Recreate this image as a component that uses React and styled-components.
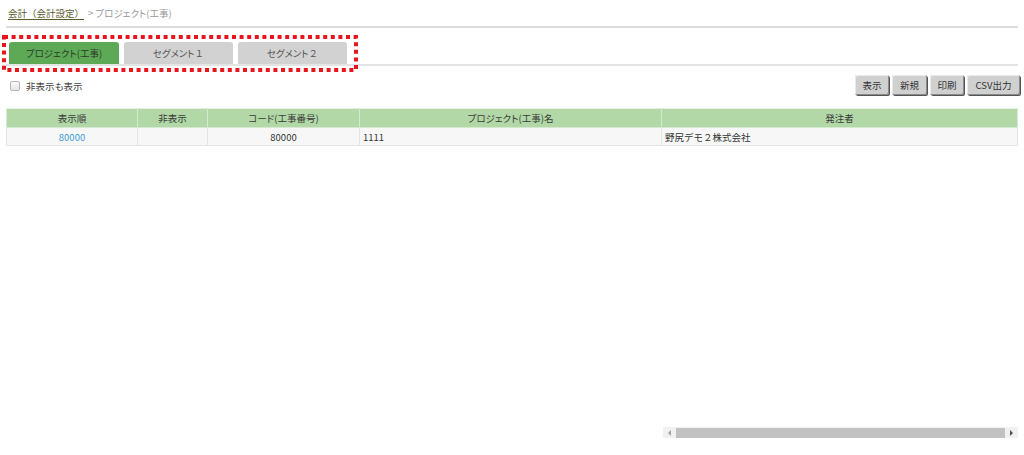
import React from 'react';
import styled, { createGlobalStyle } from 'styled-components';

const Global = createGlobalStyle`
  html, body {
    margin: 0;
    padding: 0;
    background: #fff;
  }
  body {
    font-family: "Noto Sans CJK JP", "Noto Sans", sans-serif;
    font-size: 9px;
    font-feature-settings: "palt";
    color: #333;
  }
`;

const Page = styled.div`
  display: flex;
  flex-direction: column;
  height: 455px;
  padding: 0 6px 0 6px;
  box-sizing: border-box;
`;

const Breadcrumb = styled.div`
  display: flex;
  align-items: center;
  height: 26px;
  padding-left: 2px;
  border-bottom: 2px solid #dcdcdc;
  font-size: 9.5px;
  color: #999;
`;

const Crumb = styled.a`
  color: #5c5a2e;
  text-decoration: underline;
  text-underline-offset: 2px;
  margin-right: 4px;
  font-feature-settings: normal;
`;

const TabArea = styled.div`
  position: relative;
  margin-top: 14px;
  border-bottom: 2px solid #e4e4e4;
`;

const Tabs = styled.div`
  display: flex;
  gap: 5px;
  padding-left: 3px;
`;

const Tab = styled.div`
  width: ${p => p.$w}px;
  height: 22px;
  display: flex;
  align-items: center;
  justify-content: center;
  border-radius: 3px 3px 0 0;
  background: ${p => (p.$active ? '#5da955' : '#d2d2d2')};
  color: ${p => (p.$active ? '#2e3b2b' : '#555')};
  font-size: 9.5px;
`;

const Wide = styled.span`
  font-feature-settings: normal;
`;

const Marker = styled.svg`
  position: absolute;
  left: -4px;
  top: -7px;
  overflow: visible;
`;

const Toolbar = styled.div`
  display: flex;
  justify-content: space-between;
  align-items: flex-start;
  margin-top: 9px;
  height: 33px;
`;

const CheckLabel = styled.label`
  display: flex;
  align-items: center;
  gap: 6px;
  padding-left: 4px;
  margin-top: 4px;
  color: #444;
  font-size: 9.5px;
`;

const Box = styled.span`
  width: 8px;
  height: 8px;
  border: 1px solid #b5b5b5;
  border-radius: 2px;
  background: linear-gradient(#fafafa, #e6e6e6);
`;

const Buttons = styled.div`
  display: flex;
  gap: 3px;
  margin-right: -2px;
`;

const Button = styled.button`
  width: ${p => p.$w}px;
  height: 20px;
  padding: 0;
  font-family: inherit;
  font-size: 9.5px;
  color: #333;
  background: #d0d0d0;
  border: none;
  border-radius: 2px;
  box-shadow: inset -1px -1px 0 #8a8a8a, 1px 1px 0 #555, inset 1px 1px 0 #eaeaea;
`;

const Table = styled.table`
  width: 100%;
  border-collapse: collapse;
  table-layout: fixed;
  font-size: 9.5px;
`;

const Th = styled.th`
  height: 18px;
  padding: 0;
  background: #b1d8a6;
  border: 1px solid #d6e9d0;
  border-top-color: #e6f1e3;
  font-weight: normal;
  color: #3a3a3a;
  text-align: center;
`;

const Td = styled.td`
  height: 17px;
  padding: 0 3px;
  background: #f7f7f7;
  border: 1px solid #e4e4e4;
  text-align: ${p => p.$align || 'left'};
  color: ${p => (p.$link ? '#3a9ad3' : '#333')};
  font-size: 9.5px;
  font-feature-settings: normal;
`;

const Spacer = styled.div`
  flex: 1;
`;

const ScrollBar = styled.div`
  display: flex;
  align-items: center;
  align-self: flex-end;
  width: 355px;
  height: 11px;
  margin-bottom: 17px;
  background: #f1f1f1;
`;

const Arrow = styled.span`
  width: 13px;
  display: flex;
  justify-content: center;
  &::before {
    content: '';
    border-top: 3px solid transparent;
    border-bottom: 3px solid transparent;
    ${p => (p.$dir === 'left'
      ? 'border-right: 3px solid #a3a3a3;'
      : 'border-left: 3px solid #505050;')}
  }
`;

const Thumb = styled.div`
  flex: 1;
  height: 10px;
  background: #c1c1c1;
`;

const cols = [131, 70, 152, 302, 356];

export default function App() {
  return (
    <Page>
      <Global />
      <Breadcrumb>
        <Crumb>会計（会計設定）</Crumb>
        <span>&gt; プロジェクト(工事)</span>
      </Breadcrumb>
      <TabArea>
        <Tabs>
          <Tab $active $w={110}>プロジェクト(工事)</Tab>
          <Tab $w={109}>セグメント<Wide>１</Wide></Tab>
          <Tab $w={109}>セグメント<Wide>２</Wide></Tab>
        </Tabs>
        <Marker width="356" height="37">
          <rect x="2" y="2" width="352" height="33" fill="none" stroke="#e8161c" strokeWidth="4" strokeDasharray="4 3.6" />
        </Marker>
      </TabArea>
      <Toolbar>
        <CheckLabel>
          <Box />
          非表示も表示
        </CheckLabel>
        <Buttons>
          <Button $w={34}>表示</Button>
          <Button $w={35}>新規</Button>
          <Button $w={34}>印刷</Button>
          <Button $w={53}>CSV出力</Button>
        </Buttons>
      </Toolbar>
      <Table>
        <colgroup>
          {cols.map((w, i) => <col key={i} style={{ width: w }} />)}
        </colgroup>
        <thead>
          <tr>
            <Th>表示順</Th>
            <Th>非表示</Th>
            <Th>コード(工事番号)</Th>
            <Th>プロジェクト(工事)名</Th>
            <Th>発注者</Th>
          </tr>
        </thead>
        <tbody>
          <tr>
            <Td $align="center" $link>80000</Td>
            <Td />
            <Td $align="center">80000</Td>
            <Td>1111</Td>
            <Td>野尻デモ２株式会社</Td>
          </tr>
        </tbody>
      </Table>
      <Spacer />
      <ScrollBar>
        <Arrow $dir="left" />
        <Thumb />
        <Arrow $dir="right" />
      </ScrollBar>
    </Page>
  );
}
